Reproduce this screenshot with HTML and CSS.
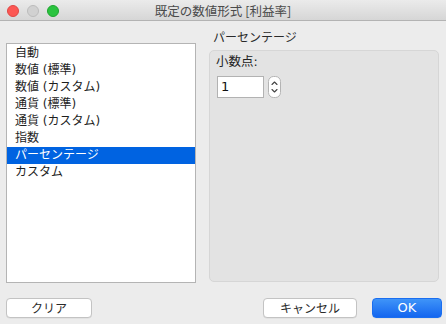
FILE: index.html
```html
<!DOCTYPE html>
<html lang="ja">
<head>
<meta charset="utf-8">
<link rel="stylesheet" href="styles.css">
</head>
<body>
<div class="window">
  <div class="titlebar">
    <div class="lights">
      <span class="light red"></span>
      <span class="light gray"></span>
      <span class="light green"></span>
    </div>
    <div class="title">既定の数値形式 [利益率]</div>
  </div>
  <div class="content">
    <ul class="list">
      <li>自動</li>
      <li>数値 (標準)</li>
      <li>数値 (カスタム)</li>
      <li>通貨 (標準)</li>
      <li>通貨 (カスタム)</li>
      <li>指数</li>
      <li class="selected">パーセンテージ</li>
      <li>カスタム</li>
    </ul>
    <div class="side">
      <div class="side-label">パーセンテージ</div>
      <div class="group">
        <div class="field-label">小数点:</div>
        <div class="field-row">
          <div class="input">1</div>
          <svg class="stepper" width="13" height="22" viewBox="0 0 13 22">
            <rect x="0.5" y="0.5" width="12" height="21" rx="5" ry="5" fill="#fff" stroke="#b4b4b4"/>
            <path d="M4 8.5 L6.5 6 L9 8.5" fill="none" stroke="#444" stroke-width="1.1" stroke-linecap="round" stroke-linejoin="round"/>
            <path d="M4 13.5 L6.5 16 L9 13.5" fill="none" stroke="#444" stroke-width="1.1" stroke-linecap="round" stroke-linejoin="round"/>
          </svg>
        </div>
      </div>
    </div>
  </div>
  <div class="footer">
    <button class="btn clear">クリア</button>
    <div class="spacer"></div>
    <button class="btn cancel">キャンセル</button>
    <button class="btn ok">OK</button>
  </div>
</div>
</body>
</html>
```
FILE: styles.css
```css
html, body {
  margin: 0;
  padding: 0;
}
body {
  width: 446px;
  height: 324px;
  background: #ececec;
  font-family: "DejaVu Sans", "Noto Sans CJK JP", sans-serif;
  font-size: 12px;
  color: #222;
  overflow: hidden;
}
.window {
  display: flex;
  flex-direction: column;
  height: 324px;
}
.titlebar {
  position: relative;
  height: 20px;
  border-bottom: 1px solid #b3b3b3;
  background: linear-gradient(#ebebeb, #d6d6d6);
  box-sizing: content-box;
}
.lights {
  display: flex;
  gap: 8px;
  padding: 5px 0 0 7px;
}
.light {
  width: 12px;
  height: 12px;
  border-radius: 50%;
  box-sizing: border-box;
}
.red { background: #fc5753; border: 1px solid #df4744; }
.gray { background: #d1d1d1; border: 1px solid #bcbcbc; }
.green { background: #2ac33f; border: 1px solid #1ea52f; }
.title {
  position: absolute;
  left: 0;
  right: 0;
  top: 3px;
  text-align: center;
  font-family: "Noto Sans CJK JP", sans-serif;
  font-size: 12.5px;
  line-height: 16px;
  color: #4a4a4a;
}
.content {
  display: flex;
  padding: 10px 0 0 6px;
}
.list {
  list-style: none;
  margin: 12px 0 0 0;
  padding: 1px 0 0 0;
  width: 190px;
  height: 240px;
  box-sizing: border-box;
  background: #fff;
  border: 1px solid #b4b4b4;
}
.list li {
  height: 17px;
  line-height: 17px;
  padding-left: 8px;
  white-space: nowrap;
  color: #1e1e1e;
}
.list li.selected {
  background: #0063e1;
  color: #fff;
}
.side {
  margin-left: 13px;
  width: 230px;
  display: flex;
  flex-direction: column;
}
.side-label {
  height: 14px;
  line-height: 14px;
  padding-left: 4px;
  margin-bottom: 5px;
  color: #2a2a2a;
}
.group {
  height: 232px;
  box-sizing: border-box;
  background: #e3e3e3;
  border: 1px solid #d6d6d6;
  border-radius: 5px;
  padding: 4px 0 0 6px;
}
.field-label {
  line-height: 14px;
  font-size: 12.5px;
  color: #222;
}
.field-row {
  display: flex;
  align-items: center;
  margin-top: 7px;
  margin-left: 1px;
}
.input {
  width: 47px;
  height: 22px;
  box-sizing: border-box;
  background: #fff;
  border: 1px solid #b2b2b2;
  font-size: 13px;
  line-height: 20px;
  padding-left: 3px;
  color: #111;
}
.stepper {
  margin-left: 4px;
  display: block;
}
.footer {
  display: flex;
  padding: 15px 4px 0 6px;
}
.spacer { flex: 1; }
.btn {
  height: 20px;
  padding: 0;
  margin: 0;
  border: 1px solid #c3c3c3;
  border-radius: 4px;
  background: #fff;
  font-family: "Noto Sans CJK JP", sans-serif;
  font-size: 12px;
  line-height: 18px;
  color: #2a2a2a;
  box-shadow: 0 0.5px 0.5px rgba(0,0,0,0.08);
}
.clear { width: 86px; }
.cancel { width: 94px; }
.ok {
  width: 70px;
  margin-left: 15px;
  border: 1px solid #1a6ef0;
  background: linear-gradient(#3f94f8, #1466ef);
  color: #fff;
  font-family: "DejaVu Sans", sans-serif;
  font-size: 13px;
}
```
